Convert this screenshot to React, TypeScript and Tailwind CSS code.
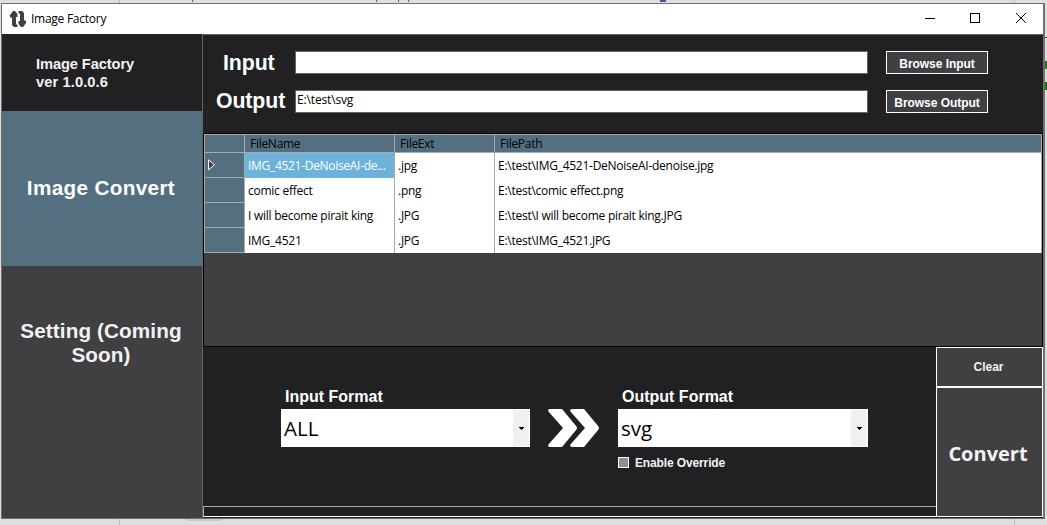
import React from 'react';

const files = [
  { name: 'IMG_4521-DeNoiseAI-de...', ext: '.jpg', path: 'E:\\test\\IMG_4521-DeNoiseAI-denoise.jpg' },
  { name: 'comic effect', ext: '.png', path: 'E:\\test\\comic effect.png' },
  { name: 'I will become pirait king', ext: '.JPG', path: 'E:\\test\\I will become pirait king.JPG' },
  { name: 'IMG_4521', ext: '.JPG', path: 'E:\\test\\IMG_4521.JPG' },
];

const ui = "font-['Open_Sans','Noto_Sans',sans-serif]";
const columns = 'grid grid-cols-[40px_150px_100px_547px]';

function TitleBar() {
  return (
    <header className={`flex h-[30px] shrink-0 items-center bg-white text-black ${ui}`}>
      <svg className="ml-[8px] h-4 w-4" viewBox="0 0 16 16" fill="#404042">
        <path d="M3 0h2l2.500 3v3H6v7l1.500 1v2H4l-2-2V6.500H0V4z" />
        <path d="M8.500 0H12l2 2v7.500h2V12l-3 4h-2l-2.500-3v-3H10V3L8.500 2z" />
      </svg>
      <h1 className="ml-[5px] text-[12px] leading-[16px] tracking-[-0.26px] whitespace-nowrap">Image Factory</h1>
      <svg className="ml-auto h-[30px] w-[138px] shrink-0" viewBox="0 0 138 30" fill="none" stroke="#000" shapeRendering="crispEdges">
        <path d="M20 14.500h10M65.500 9.500h9v9h-9z" />
        <path d="M111 9l10 10M121 9l-10 10" shapeRendering="auto" />
      </svg>
    </header>
  );
}

function Sidebar() {
  return (
    <aside className="flex w-[200px] shrink-0 flex-col bg-[#404042] font-bold text-[#f2f2f2]">
      <div className="h-[77px] bg-[#212123] pt-[21px] pl-[34px] text-[14.67px] leading-[18px] whitespace-nowrap">
        <p className="tracking-[-0.1px]">Image Factory</p>
        <p className="tracking-[0.1px]">ver 1.0.0.6</p>
      </div>
      <button className="h-[155px] bg-[#547080] pr-[2px] pb-[2px] text-[20.7px] leading-6 font-bold tracking-[0.35px] text-white">Image Convert</button>
      <button className="h-[154px] pr-[2px] text-[20.7px] leading-6 font-bold tracking-[0.12px]">
        Setting (Coming
        <br />
        Soon)
      </button>
    </aside>
  );
}

function PathRow({ label, value, pad }: { label: string; value: string; pad: string }) {
  return (
    <div className="flex h-[23px]">
      <label className={`w-[92px] text-[21.3px] font-bold tracking-[-0.1px] text-white ${pad}`}>{label}</label>
      <div className={`h-[23px] w-[573px] border border-[#646464] bg-white pl-[1px] text-[12px] leading-[18px] tracking-[-0.15px] text-black ${ui}`}>
        {value}
      </div>
      <button className="ml-[18px] h-[23px] w-[102px] border border-white bg-[#404042] pt-[2px] text-[12px] leading-[20px] font-bold tracking-[-0.05px] whitespace-nowrap text-white">
        Browse {label}
      </button>
    </div>
  );
}

function FileTable() {
  return (
    <section className={`h-[214px] border border-black bg-[#404042] text-[12px] text-black ${ui}`}>
      <div className={`${columns} h-[19px] border border-r-0 border-[#a9a9a9] bg-[#547080] leading-[18px] tracking-[-0.28px]`}>
        <span className="border-r border-[#a9a9a9]" />
        <span className="border-r border-[#a9a9a9] pl-[5px]">FileName</span>
        <span className="border-r border-[#a9a9a9] pl-[5px]">FileExt</span>
        <span className="border-r border-[#a9a9a9] pl-[5px]">FilePath</span>
      </div>
      {files.map((f, i) => (
        <div key={f.path} className={`${columns} h-[25px] border-l border-[#a9a9a9] bg-white leading-[25px] tracking-[-0.26px] whitespace-nowrap`}>
          <span className="border-r border-b border-[#a9a9a9] bg-[#547080]">
            {i === 0 && (
              <svg className="mt-[6px] ml-[3px] h-[12px] w-[8px]" viewBox="0 0 8 12">
                <path d="M.5.800v10l6-5z" fill="#404042" stroke="#fff" />
              </svg>
            )}
          </span>
          <span className={i === 0 ? 'border-r border-[#a9a9a9] bg-[#6cb2db] pl-[3px] tracking-[-0.3px] text-white' : 'border-r border-[#a9a9a9] pl-[3px]'}>{f.name}</span>
          <span className="border-r border-[#a9a9a9] pl-[3px]">{f.ext}</span>
          <span className="border-r border-[#a9a9a9] pl-[3px]">{f.path}</span>
        </div>
      ))}
    </section>
  );
}

function FormatSelect({ label, value, width }: { label: string; value: string; width: string }) {
  return (
    <div className={width}>
      <label className="block h-[22px] pl-[4px] text-[16px] leading-[19px] font-bold whitespace-nowrap text-white">{label}</label>
      <div className="flex h-[38px] border border-white bg-white">
        <span className={`flex-1 pl-[2px] text-[20.5px] leading-[37px] text-black ${ui}`}>{value}</span>
        <span className="flex w-4 items-center justify-center bg-[#f0f0f0]">
          <svg className="h-[3px] w-[5px]" viewBox="0 0 5 3" shapeRendering="crispEdges">
            <path d="M0 0h5v1H4v1H3v1H2V2H1V1H0z" />
          </svg>
        </span>
      </div>
    </div>
  );
}

function ConvertPanel() {
  return (
    <section className="flex h-[170px]">
      <div className="flex w-[733px] flex-col">
        <div className="flex h-[159px] pt-[40px] pl-[78px]">
          <FormatSelect label="Input Format" value="ALL" width="w-[249px]" />
          <svg className="mt-[22px] ml-[18px] h-[38px] w-[52px]" viewBox="0 0 52 38" fill="#fff">
            <path d="M2 0H14L28.500 17.500Q29.500 19 28.500 20.500L14 38H2Q0 38 0 36L15 19 0 2Q0 0 2 0zM24 0H36L50.500 17.500Q51.500 19 50.500 20.500L36 38H24Q22 38 22 36L37 19 22 2Q22 0 24 0z" />
          </svg>
          <div className="ml-[18px]">
            <FormatSelect label="Output Format" value="svg" width="w-[250px]" />
            <label className="mt-[8px] flex h-4 items-center gap-[6px] text-[12px] leading-4 font-bold tracking-[-0.13px] text-[#f2f2f2]">
              <span className="-mt-px h-[11px] w-[11px] border border-white bg-[#8f8e94]" />
              Enable Override
            </label>
          </div>
        </div>
        <div className="h-[11px] border-t border-b border-l border-[#a9a9a9] border-b-white bg-[#212123]" />
      </div>
      <div className="flex w-[107px] flex-col text-[#f2f2f2]">
        <button className="h-10 border border-white bg-[#404042] pr-[2px] text-[12px] font-bold">Clear</button>
        <button className={`h-[130px] border border-white bg-[#404042] pt-[3px] pr-[3px] text-[20px] font-bold ${ui}`}>Convert</button>
      </div>
    </section>
  );
}

export default function App() {
  return (
    <div className="relative h-[525px] w-[1047px] overflow-hidden bg-[#dedede] pt-[3px] pl-[1px] font-['Liberation_Sans',Arial,sans-serif]">
      <svg className="absolute inset-0" width="1047" height="525" shapeRendering="crispEdges">
        <path d="M119.500 0v3M119.500 518v7M1014.500 0v3M1014.500 518v7" stroke="#b9b9c0" />
        <path d="M192 0h1v2h-1zM376 0h1v2h-1zM398 0h1v2h-1zM408 0h1v2h-1zM660 0h6v2h-6z" fill="#54549b" />
        <path d="M1044 61h3v8h-3zM1044 82h3v8h-3z" fill="#137a00" />
        <path d="M1045 37h2v1h-2z" fill="#333" />
        <path d="M186 518h36v3h-36z" fill="#cacaca" />
        <path d="M198 518h4v1h-4zM212 518h5v1h-5z" fill="#444" />
      </svg>
      <div className="relative flex h-[516px] w-[1044px] flex-col border border-r-2 border-[#707073] bg-[#212123]">
        <TitleBar />
        <div className="flex h-[484px]">
          <Sidebar />
          <main className="h-[484px] w-[841px] border-t border-l border-[#646464] bg-[#212123]">
            <div className="flex h-[98px] flex-col gap-4 pt-[16px]">
              <PathRow label="Input" value="" pad="pl-[20px] leading-[24px]" />
              <PathRow label="Output" value="E:\test\svg" pad="pl-[13px] leading-[22px]" />
            </div>
            <FileTable />
            <ConvertPanel />
          </main>
        </div>
      </div>
    </div>
  );
}
